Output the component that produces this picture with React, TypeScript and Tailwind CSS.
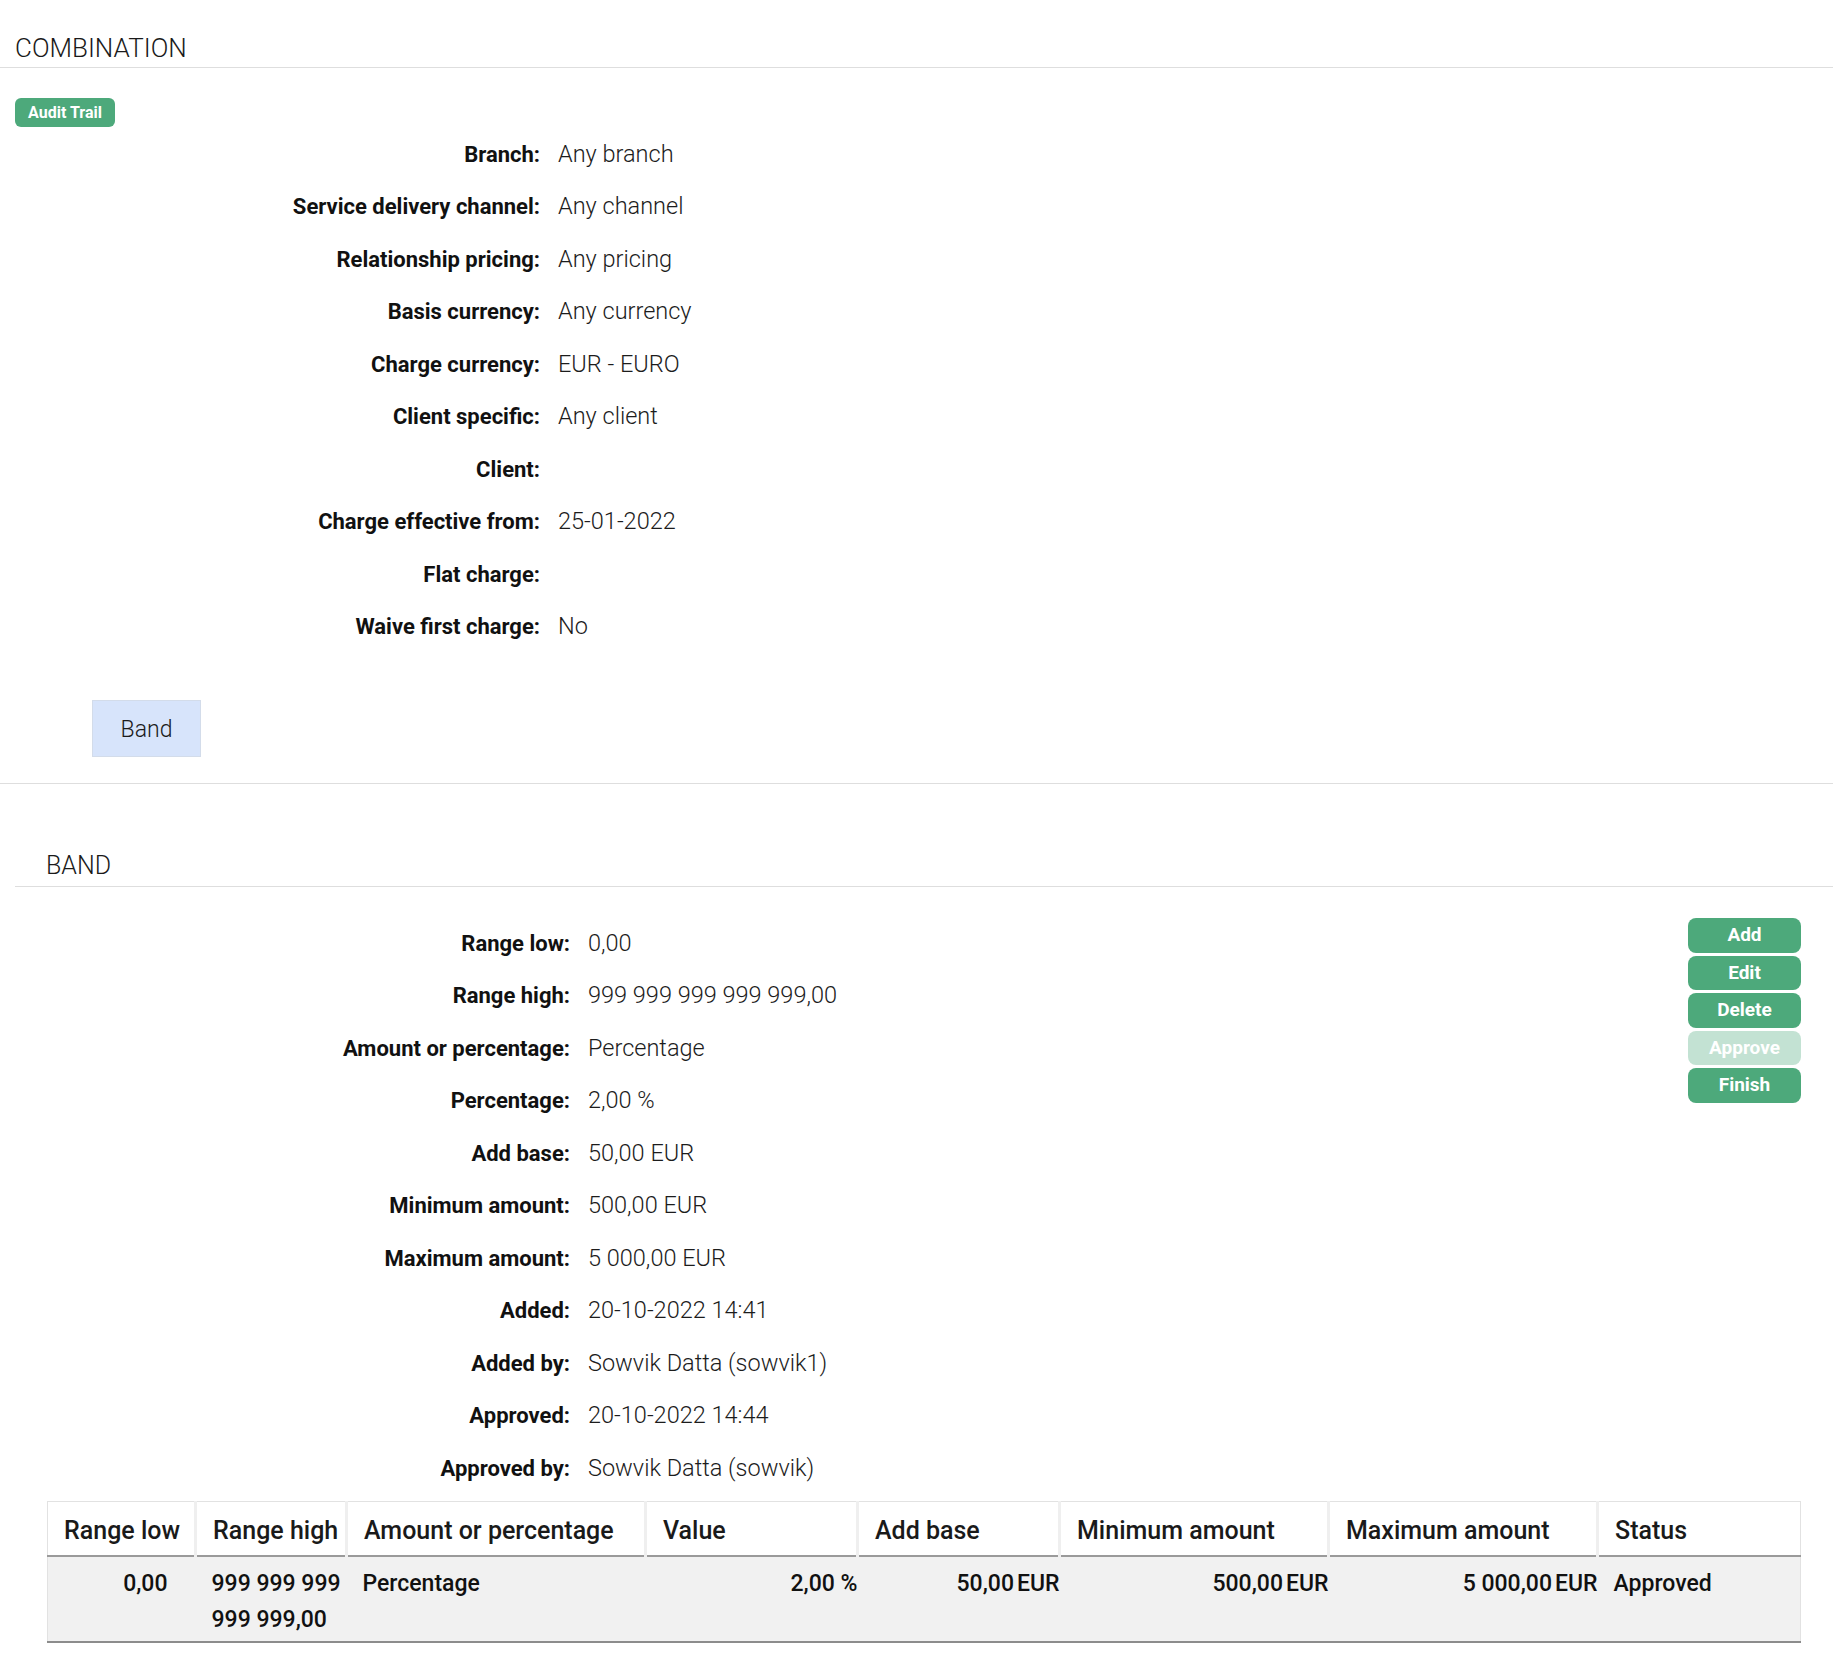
import React from "react"

const combination: [string, string][] = [
  ["Branch:", "Any branch"],
  ["Service delivery channel:", "Any channel"],
  ["Relationship pricing:", "Any pricing"],
  ["Basis currency:", "Any currency"],
  ["Charge currency:", "EUR - EURO"],
  ["Client specific:", "Any client"],
  ["Client:", ""],
  ["Charge effective from:", "25-01-2022"],
  ["Flat charge:", ""],
  ["Waive first charge:", "No"],
]

const band: [string, string][] = [
  ["Range low:", "0,00"],
  ["Range high:", "999 999 999 999 999,00"],
  ["Amount or percentage:", "Percentage"],
  ["Percentage:", "2,00 %"],
  ["Add base:", "50,00 EUR"],
  ["Minimum amount:", "500,00 EUR"],
  ["Maximum amount:", "5 000,00 EUR"],
  ["Added:", "20-10-2022 14:41"],
  ["Added by:", "Sowvik Datta (sowvik1)"],
  ["Approved:", "20-10-2022 14:44"],
  ["Approved by:", "Sowvik Datta (sowvik)"],
]

function Row({ label, value, labelClass }: { label: string; value: string; labelClass: string }) {
  return (
    <div className="flex h-[52.5px] items-center">
      <div className={`${labelClass} shrink-0 text-right text-[22px] font-bold text-[#111]`}>{label}</div>
      <div className="pl-[18px] text-[23.5px] font-light text-[#1c1c1c]">{value}</div>
    </div>
  )
}

function GreenButton({ children, faded }: { children: React.ReactNode; faded?: boolean }) {
  return (
    <button
      className={`h-[34.5px] w-[113px] rounded-[8px] text-[19px] font-bold text-white ${
        faded ? "bg-[#c3e2d3]" : "bg-[#4da97b]"
      }`}
    >
      {children}
    </button>
  )
}

const Eur = ({ v }: { v: string }) => (
  <>
    {v}
    <span className="ml-[3px]">EUR</span>
  </>
)

export default function App() {
  return (
    <div className="min-h-[1673px] w-full bg-white font-['Roboto','Liberation_Sans',sans-serif] text-[#111]">
      {/* combination */}
      <div className="border-b border-[#dedede] pb-[1px] pl-[15px] pt-[30px] text-[26px] font-light leading-[36px] text-[#1a1a1a]">
        COMBINATION
      </div>
      <div className="border-b border-[#dedede] pb-[26px]">
        <div className="ml-[15px] mt-[30px] flex h-[29px] w-[100px] items-center justify-center rounded-[6px] bg-[#4da97b] text-[16px] font-bold text-white">
          Audit Trail
        </div>
        <div className="mt-[1px]">
          {combination.map(([l, v]) => (
            <Row key={l} label={l} value={v} labelClass="w-[540px]" />
          ))}
        </div>
        <button className="ml-[92px] mt-[47px] h-[57px] w-[109px] border border-[#d3dcea] bg-[#d7e4fb] pt-[4px] text-[23px] font-light text-[#1a1a1a]">
          Band
        </button>
      </div>

      {/* band */}
      <div className="ml-[15px] mt-[62px] border-b border-[#dedede] pb-[2px] pl-[31px] pt-[2px] text-[25px] font-light leading-[36px] text-[#1a1a1a]">
        BAND
      </div>
      <div className="mt-[30px] flex">
        <div className="flex-1">
          {band.map(([l, v]) => (
            <Row key={l} label={l} value={v} labelClass="w-[570px]" />
          ))}
        </div>
        <div className="mr-[32px] mt-[1px] flex flex-col gap-[3px]">
          <GreenButton>Add</GreenButton>
          <GreenButton>Edit</GreenButton>
          <GreenButton>Delete</GreenButton>
          <GreenButton faded>Approve</GreenButton>
          <GreenButton>Finish</GreenButton>
        </div>
      </div>

      <table className="ml-[47px] mt-[6px] w-[1753px] table-fixed border-collapse border border-[#e2e2e2]">
        <colgroup>
          <col className="w-[148px]" />
          <col className="w-[151px]" />
          <col className="w-[299px]" />
          <col className="w-[212px]" />
          <col className="w-[202px]" />
          <col className="w-[269px]" />
          <col className="w-[269px]" />
          <col className="w-[203px]" />
        </colgroup>
        <thead>
          <tr className="h-[55px] whitespace-nowrap border-b-2 border-[#9a9a9a] text-left text-[25px] text-[#1a1a1a]">
            <th className="border-r-[3px] border-[#efefef] pl-[16px] pt-[5px] font-medium">Range low</th>
            <th className="border-r-[3px] border-[#efefef] pl-[16px] pt-[5px] font-medium">Range high</th>
            <th className="border-r-[3px] border-[#efefef] pl-[16px] pt-[5px] font-medium">Amount or percentage</th>
            <th className="border-r-[3px] border-[#efefef] pl-[16px] pt-[5px] font-medium">Value</th>
            <th className="border-r-[3px] border-[#efefef] pl-[16px] pt-[5px] font-medium">Add base</th>
            <th className="border-r-[3px] border-[#efefef] pl-[16px] pt-[5px] font-medium">Minimum amount</th>
            <th className="border-r-[3px] border-[#efefef] pl-[16px] pt-[5px] font-medium">Maximum amount</th>
            <th className="pl-[16px] pt-[5px] font-medium">Status</th>
          </tr>
        </thead>
        <tbody>
          <tr className="border-b-2 border-[#8c8c8c] bg-[#f1f1f1] align-top text-[23px] font-medium leading-[36px] text-[#111]">
            <td className="pb-[3px] pr-[28px] pt-[9px] text-right">0,00</td>
            <td className="whitespace-nowrap pb-[3px] pl-[16px] pt-[9px]">
              999 999 999
              <br />
              999 999,00
            </td>
            <td className="pb-[3px] pl-[16px] pt-[9px]">Percentage</td>
            <td className="pb-[3px] pt-[9px] text-right">2,00 %</td>
            <td className="pb-[3px] pt-[9px] text-right">
              <Eur v="50,00" />
            </td>
            <td className="pb-[3px] pt-[9px] text-right">
              <Eur v="500,00" />
            </td>
            <td className="pb-[3px] pt-[9px] text-right">
              <Eur v="5 000,00" />
            </td>
            <td className="pb-[3px] pl-[16px] pt-[9px]">Approved</td>
          </tr>
        </tbody>
      </table>
    </div>
  )
}
